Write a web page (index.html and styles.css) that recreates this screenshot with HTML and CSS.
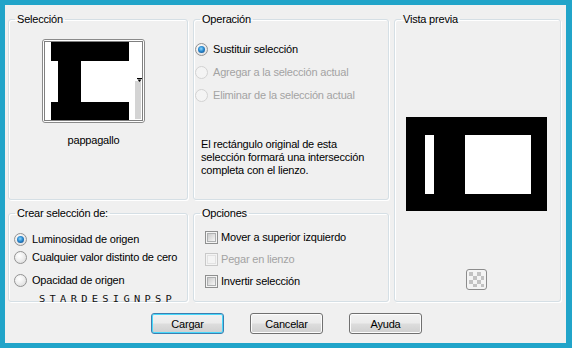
FILE: index.html
```html
<!DOCTYPE html>
<html lang="es">
<head>
<meta charset="utf-8">
<title>Selección</title>
<link rel="stylesheet" href="styles.css">
</head>
<body>
<div class="screen">
  <div class="dialog">
    <div class="grid">
      <fieldset class="group g-sel">
        <legend>Selección</legend>
        <div class="thumb">
          <svg width="103" height="84" viewBox="0 0 103 84">
            <rect x="0.5" y="0.5" width="102" height="83" rx="2.5" fill="#fff" stroke="#8a8a8a"/>
            <rect x="2.5" y="2.5" width="98" height="79" fill="none" stroke="#000" stroke-dasharray="1 1"/>
            <rect x="9" y="3" width="78" height="78" fill="#000"/>
            <rect x="9" y="22" width="7" height="41" fill="#fff"/>
            <rect x="39" y="22" width="48" height="41" fill="#fff"/>
            <rect x="93" y="42" width="6" height="38" fill="#d4d4d4"/>
            <rect x="95" y="39" width="5" height="1" fill="#000"/>
            <polygon points="95.5,40.5 99.5,40.5 97.5,43" fill="#000"/>
          </svg>
        </div>
        <div class="thumb-name">pappagallo</div>
      </fieldset>

      <fieldset class="group g-op">
        <legend>Operación</legend>
        <div class="options">
          <div class="opt"><span class="rb on"></span><span>Sustituir selección</span></div>
          <div class="opt off"><span class="rb dis"></span><span>Agregar a la selección actual</span></div>
          <div class="opt off"><span class="rb dis"></span><span>Eliminar de la selección actual</span></div>
        </div>
        <p class="note">El rectángulo original de esta<br>selección formará una intersección<br>completa con el lienzo.</p>
      </fieldset>

      <fieldset class="group g-prev">
        <legend>Vista previa</legend>
        <div class="preview">
          <svg width="141" height="94" viewBox="0 0 141 94">
            <rect width="141" height="94" fill="#000"/>
            <rect x="19" y="18" width="9" height="59" fill="#fff"/>
            <rect x="59" y="18" width="66" height="59" fill="#fff"/>
          </svg>
        </div>
        <div class="checker">
          <svg width="21" height="21" viewBox="0 0 21 21">
            <rect x="0.5" y="0.5" width="20" height="20" rx="2.5" fill="#f4f4f4" stroke="#8c8c8c"/>
            <g fill="#c2c2c2">
              <rect x="3" y="3" width="4" height="4"/>
              <rect x="11" y="3" width="4" height="4"/>
              <rect x="7" y="7" width="4" height="4"/>
              <rect x="15" y="7" width="3" height="4"/>
              <rect x="3" y="11" width="4" height="4"/>
              <rect x="11" y="11" width="4" height="4"/>
              <rect x="7" y="15" width="4" height="3"/>
              <rect x="15" y="15" width="3" height="3"/>
            </g>
          </svg>
        </div>
      </fieldset>

      <fieldset class="group g-crear">
        <legend>Crear selección de:</legend>
        <div class="crear-list">
          <div class="opt c1"><span class="rb on"></span><span>Luminosidad de origen</span></div>
          <div class="opt c2"><span class="rb"></span><span>Cualquier valor distinto de cero</span></div>
          <div class="opt c3"><span class="rb"></span><span>Opacidad de origen</span></div>
        </div>
      </fieldset>

      <fieldset class="group g-opc">
        <legend>Opciones</legend>
        <div class="checks">
          <div class="chk"><span class="cb"></span><span>Mover a superior izquierdo</span></div>
          <div class="chk off"><span class="cb dis"></span><span>Pegar en lienzo</span></div>
          <div class="chk"><span class="cb"></span><span>Invertir selección</span></div>
        </div>
      </fieldset>
    </div>

    <div class="buttons">
      <button class="btn default">Cargar</button>
      <button class="btn">Cancelar</button>
      <button class="btn">Ayuda</button>
    </div>

    <div class="watermark">STARDESIGNPSP</div>
  </div>
</div>
</body>
</html>
```

FILE: styles.css
```css
* { box-sizing: border-box; }

html, body {
  margin: 0;
  padding: 0;
}

body {
  font-family: "Liberation Sans", Arial, sans-serif;
  font-size: 11px;
  line-height: 13px;
  letter-spacing: -0.2px;
  color: #000;
  background: #21a4c9;
}

.screen {
  width: 572px;
  height: 348px;
  padding: 5px 6px 5px 5px;
  background: #21a4c9;
}

.dialog {
  position: relative;
  width: 561px;
  height: 338px;
  background: #f0f0f0;
  padding: 8px 0 0 3px;
}

.grid {
  display: grid;
  grid-template-columns: 180px 196px 167px;
  grid-template-rows: 187px 95px;
  column-gap: 5px;
  row-gap: 7px;
}

.group {
  margin: 0;
  padding: 0;
  min-width: 0;
  border: 1px solid #d5dfe5;
  border-radius: 3px;
  box-shadow: inset 1px 1px 0 #fff, 1px 1px 0 #fff;
}

.group legend {
  margin-left: 6px;
  padding: 0 2px;
  font-size: 11px;
  line-height: 13px;
}

.g-sel { grid-column: 1; grid-row: 1; }
.g-op { grid-column: 2; grid-row: 1; }
.g-prev { grid-column: 3; grid-row: 1 / span 2; }
.g-crear { grid-column: 1; grid-row: 2; }
.g-opc { grid-column: 2; grid-row: 2; }

/* Selección */
.thumb {
  margin: 13px 0 0 33px;
  width: 103px;
  height: 84px;
}
.thumb svg { display: block; }

.thumb-name {
  margin: 11px 0 0 33px;
  width: 103px;
  text-align: center;
}

/* Radio / checkbox rows */
.opt, .chk {
  display: flex;
  align-items: center;
  height: 13px;
  white-space: nowrap;
}
.opt.off, .chk.off { color: #a3a3a3; }

.rb {
  position: relative;
  flex: none;
  width: 13px;
  height: 13px;
  margin-right: 5px;
  border-radius: 50%;
  border: 1px solid #939393;
  background: radial-gradient(circle at 40% 35%, #ffffff 0%, #f1f1f1 40%, #d6d6d6 100%);
}
.rb.on::after {
  content: "";
  position: absolute;
  left: 2px;
  top: 2px;
  width: 7px;
  height: 7px;
  border-radius: 50%;
  background: radial-gradient(circle at 45% 40%, #8fd7fb 0%, #2a8ad0 45%, #0c3d78 100%);
}
.rb.dis {
  border-color: #d2d2d2;
  background: #f4f4f4;
}

.cb {
  position: relative;
  flex: none;
  width: 13px;
  height: 13px;
  margin-right: 3px;
  border: 1px solid #8e8f8f;
  background: #f4f4f4;
}
.cb::after {
  content: "";
  position: absolute;
  left: 1px;
  top: 1px;
  right: 1px;
  bottom: 1px;
  border: 1px solid #aeb0b1;
  background: linear-gradient(135deg, #cbcbcb, #f6f6f6);
}
.cb.dis { border-color: #c9c9c9; }
.cb.dis::after {
  border-color: #e2e2e2;
  background: #f4f4f4;
}

/* Operación */
.options {
  display: flex;
  flex-direction: column;
  gap: 10px;
  margin-top: 17px;
  padding-left: 1px;
}

.note {
  margin: 36px 0 0 7px;
  line-height: 13px;
  white-space: nowrap;
}

/* Vista previa */
.preview {
  margin: 91px 0 0 11px;
  width: 141px;
  height: 94px;
}
.preview svg, .checker svg { display: block; }

.checker {
  margin: 58px 0 0 71px;
  width: 21px;
  height: 21px;
}

/* Crear selección */
.crear-list {
  padding-left: 5px;
}
.c1 { margin-top: 13px; }
.c2 { margin-top: 5px; }
.c3 { margin-top: 10px; }

/* Opciones */
.checks {
  display: flex;
  flex-direction: column;
  gap: 9px;
  margin-top: 11px;
  padding-left: 11px;
}

/* Buttons */
.buttons {
  display: flex;
  gap: 26px;
  margin-top: 11px;
  padding-left: 143px;
}

.btn {
  width: 73px;
  height: 21px;
  padding: 0;
  font-family: "Liberation Sans", Arial, sans-serif;
  font-size: 11px;
  letter-spacing: -0.2px;
  color: #000;
  border: 1px solid #707070;
  border-radius: 3px;
  background: linear-gradient(to bottom, #f2f2f2 0%, #ebebeb 48%, #dddddd 52%, #cfcfcf 100%);
  box-shadow: inset 0 0 0 1px #fcfcfc;
}
.btn.default {
  border-color: #3c7fb1;
  box-shadow: inset 0 0 0 1px #48d8fb;
}

/* Watermark overlaid on frame border */
.watermark {
  position: absolute;
  left: 34px;
  top: 291px;
  font-family: "DejaVu Sans Mono", monospace;
  font-size: 8px;
  font-weight: normal;
  line-height: 8px;
  letter-spacing: 3.3px;
  color: #111;
  transform: scaleX(1.3);
  transform-origin: left top;
}
```
